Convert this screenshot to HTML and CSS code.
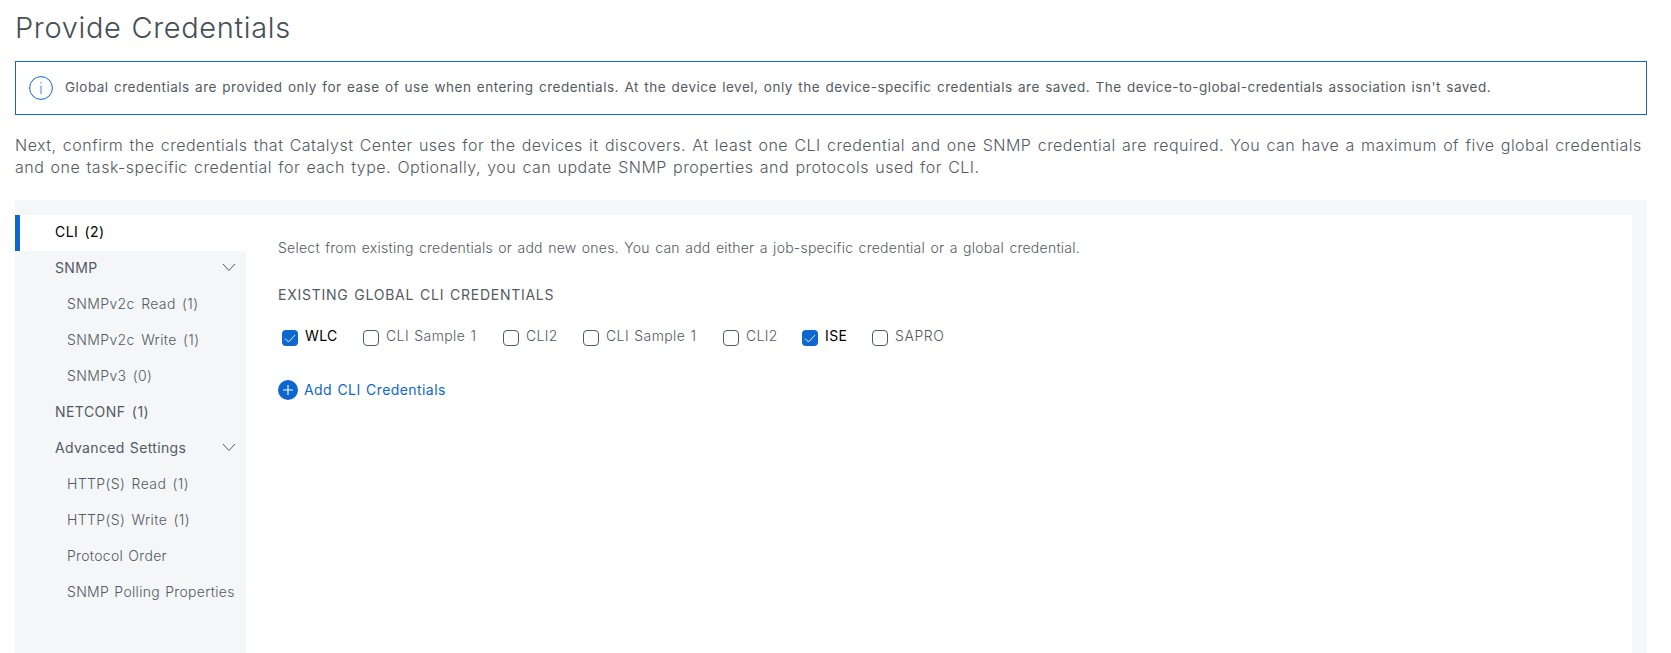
FILE: index.html
```html
<!DOCTYPE html>
<html lang="en">
<head>
<meta charset="utf-8">
<title>Provide Credentials</title>
<link rel="stylesheet" href="styles.css">
</head>
<body>
<main class="page">
  <h1 class="title">Provide Credentials</h1>

  <div class="alert">
    <svg class="alert-icon" width="24" height="24" viewBox="0 0 24 24" fill="none" stroke="#0d67cf"><circle cx="12" cy="12" r="11.4"/><path d="M12 9.5V18M12 6V7.4" stroke-opacity="0.8"/></svg>
    <span class="alert-text">Global credentials are provided only for ease of use when entering credentials. At the device level, only the device-specific credentials are saved. The device-to-global-credentials association isn't saved.</span>
  </div>

  <p class="intro">Next, confirm the credentials that Catalyst Center uses for the devices it discovers. At least one CLI credential and one SNMP credential are required. You can have a maximum of five global credentials<br>and one task-specific credential for each type. Optionally, you can update SNMP properties and protocols used for CLI.</p>

  <div class="panel">
    <nav class="sidebar">
      <a class="item active">CLI (2)</a>
      <a class="item snmp">SNMP
        <svg class="chevron" width="14" height="9" viewBox="0 0 14 9" fill="none" stroke="#525b63"><path d="M1 1l6 6.5L13 1"/></svg></a>
      <a class="item sub">SNMPv2c Read (1)</a>
      <a class="item sub">SNMPv2c Write (1)</a>
      <a class="item sub">SNMPv3 (0)</a>
      <a class="item netconf">NETCONF (1)</a>
      <a class="item advanced">Advanced Settings
        <svg class="chevron" width="14" height="9" viewBox="0 0 14 9" fill="none" stroke="#525b63"><path d="M1 1l6 6.5L13 1"/></svg></a>
      <a class="item sub">HTTP(S) Read (1)</a>
      <a class="item sub">HTTP(S) Write (1)</a>
      <a class="item sub words">Protocol Order</a>
      <a class="item sub words">SNMP Polling Properties</a>
    </nav>

    <section class="content">
      <p class="hint">Select from existing credentials or add new ones. You can add either a job-specific credential or a global credential.</p>
      <h2 class="heading">EXISTING GLOBAL CLI CREDENTIALS</h2>
      <div class="options">
        <label class="option wlc checked"><span class="box"><svg width="16" height="16" viewBox="0 0 16 16" fill="none" stroke="#fff" stroke-width="0.9"><path d="M3 8.5l3.5 3.5L13 5"/></svg></span>WLC</label>
        <label class="option sample"><span class="box"></span>CLI Sample 1</label>
        <label class="option cli2"><span class="box"></span>CLI2</label>
        <label class="option sample"><span class="box"></span>CLI Sample 1</label>
        <label class="option cli2 second"><span class="box"></span>CLI2</label>
        <label class="option ise checked"><span class="box"><svg width="16" height="16" viewBox="0 0 16 16" fill="none" stroke="#fff" stroke-width="0.9"><path d="M3 8.5l3.5 3.5L13 5"/></svg></span>ISE</label>
        <label class="option"><span class="box"></span>SAPRO</label>
      </div>
      <a class="add"><svg width="20" height="20" viewBox="0 0 20 20"><circle cx="10" cy="10" r="10" fill="#0d67cf"/><path d="M10 5v10M5 10h10" stroke="#fff" stroke-width="1.1"/></svg>Add CLI Credentials</a>
    </section>
  </div>
</main>
</body>
</html>
```

FILE: styles.css
```css
* { box-sizing: border-box; }

html, body { height: 100%; }

body {
  margin: 0;
  background: #fff;
  color: #525b63;
  font: 14px/20px Inter, "Liberation Sans", sans-serif;
  overflow: hidden;
}

.page {
  display: flex;
  flex-direction: column;
  height: 653px;
  padding: 9px 24px 0 15px;
}

.title {
  margin: 0;
  height: 52px;
  font-size: 29px;
  font-weight: 300;
  line-height: 38px;
  letter-spacing: 0.66px;
  word-spacing: 1px;
  color: #464e55;
}

.alert {
  display: flex;
  align-items: center;
  height: 54px;
  padding-left: 13px;
  border: 1px solid #0d67cf;
  white-space: nowrap;
}

.alert-icon { flex: none; }

.alert-text {
  margin-left: 12px;
  padding-bottom: 2px;
  font-size: 13.5px;
  letter-spacing: 0.485px;
  word-spacing: 1.2px;
}

.intro {
  margin: 19px 0 0;
  height: 66px;
  font-size: 16px;
  font-weight: 300;
  line-height: 22px;
  letter-spacing: 0.488px;
  word-spacing: 1.3px;
  white-space: nowrap;
}

.panel {
  display: flex;
  flex: 1;
  padding: 15px 15px 0 0;
  background: #f4f6f8;
}

.sidebar {
  display: flex;
  flex-direction: column;
  width: 231px;
}

.item {
  display: flex;
  align-items: center;
  justify-content: space-between;
  height: 36px;
  padding: 0 10px 2px 40px;
  white-space: nowrap;
  word-spacing: 2px;
}

.item.active {
  padding-left: 35px;
  border-left: 5px solid #0d67cf;
  background: #fff;
  color: #000;
  letter-spacing: 0.4px;
}

.item.snmp { letter-spacing: 0.35px; }
.item.netconf { letter-spacing: 0.45px; }
.item.advanced { letter-spacing: 0.33px; word-spacing: 1px; }

.chevron { margin-bottom: 2px; }

.item.sub {
  padding-left: 52px;
  padding-right: 0;
  font-weight: 300;
  letter-spacing: 0.39px;
}

.item.sub.words { letter-spacing: 0.31px; word-spacing: 1px; }

.content {
  flex: 1;
  padding: 23px 32px;
  background: #fff;
  white-space: nowrap;
}

.hint {
  margin: 0 0 27px;
  font-weight: 300;
  letter-spacing: 0.25px;
  word-spacing: 1.2px;
}

.heading {
  margin: 0;
  font-size: 14px;
  font-weight: 400;
  line-height: 20px;
  letter-spacing: 0.74px;
  word-spacing: 1.2px;
}

.options {
  display: flex;
  margin-top: 21px;
  padding-left: 4px;
}

.option {
  display: flex;
  font-weight: 300;
  letter-spacing: 0.6px;
}

.option.checked {
  font-weight: 400;
  color: #000;
}

.option.wlc { width: 81px; letter-spacing: 0.4px; }
.option.sample { width: 140px; letter-spacing: 0.4px; word-spacing: 1px; }
.option.cli2 { width: 80px; letter-spacing: 0.3px; }
.option.second { width: 79px; }
.option.ise { width: 70px; letter-spacing: 0.4px; }

.box {
  width: 16px;
  height: 16px;
  margin: 4px 7px 0 0;
  border: 1px solid #525b63;
  border-radius: 4px;
}

.checked .box {
  border: 0;
  background: #0d67cf;
}

.box svg { display: block; }

.add {
  display: flex;
  align-items: center;
  gap: 6px;
  margin-top: 34px;
  color: #0d67cf;
  letter-spacing: 0.43px;
  word-spacing: 1px;
}
```
